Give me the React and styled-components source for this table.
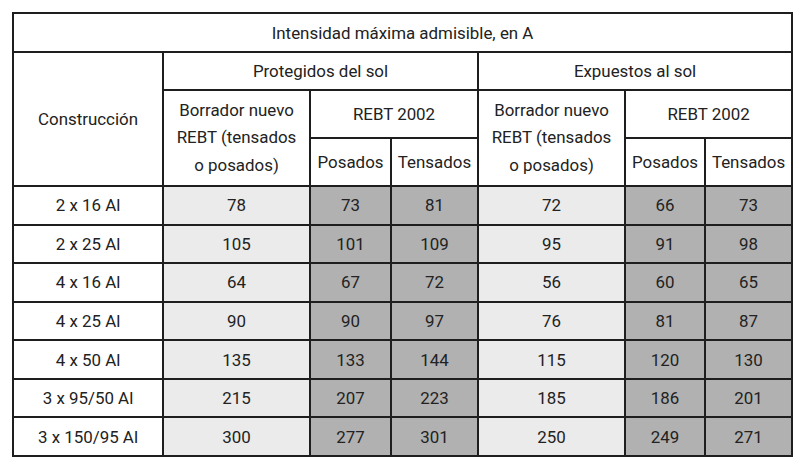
import React from "react";
import styled, { createGlobalStyle } from "styled-components";

const Global = createGlobalStyle`
  html, body { margin: 0; padding: 0; background: #fff; }
  body { font-family: Roboto, "Liberation Sans", Arial, sans-serif; color: #222; }
`;

const Page = styled.div`
  padding: 12px 0 0 12px;
  width: 800px;
  height: 466px;
  box-sizing: border-box;
`;

const Table = styled.table`
  border-collapse: collapse;
  table-layout: fixed;
  width: 781px;
  font-size: 16.9px;
  color: #222;
`;

const Th = styled.th`
  border: 2px solid #1e1e1e;
  font-weight: 400;
  text-align: center;
  vertical-align: middle;
  padding: 0;
  line-height: ${(p) => (p.$multi ? "27.5px" : "20px")};
`;

const HeadRow = styled.tr`
  height: ${(p) => p.$h}px;
`;

const BodyRow = styled.tr`
  height: 38.57px;
`;

const Td = styled.td`
  border: 2px solid #1e1e1e;
  text-align: center;
  vertical-align: middle;
  padding: 0;
  background: ${(p) =>
    p.$tone === "light" ? "#ebebeb" : p.$tone === "dark" ? "#b1b1b1" : "#ffffff"};
`;

const widths = [150, 147, 81, 87, 147, 80, 87];

const rows = [
  ["2 x 16 Al", 78, 73, 81, 72, 66, 73],
  ["2 x 25 Al", 105, 101, 109, 95, 91, 98],
  ["4 x 16 Al", 64, 67, 72, 56, 60, 65],
  ["4 x 25 Al", 90, 90, 97, 76, 81, 87],
  ["4 x 50 Al", 135, 133, 144, 115, 120, 130],
  ["3 x 95/50 Al", 215, 207, 223, 185, 186, 201],
  ["3 x 150/95 Al", 300, 277, 301, 250, 249, 271],
];

const tones = [null, "light", "dark", "dark", "light", "dark", "dark"];

export default function App() {
  return (
    <>
      <Global />
      <Page>
        <Table>
          <colgroup>
            {widths.map((w, i) => (
              <col key={i} style={{ width: w }} />
            ))}
          </colgroup>
          <thead>
            <HeadRow $h={39}>
              <Th colSpan={7}>Intensidad máxima admisible, en A</Th>
            </HeadRow>
            <HeadRow $h={38}>
              <Th rowSpan={3}>Construcción</Th>
              <Th colSpan={3}>Protegidos del sol</Th>
              <Th colSpan={3}>Expuestos al sol</Th>
            </HeadRow>
            <HeadRow $h={48}>
              <Th rowSpan={2} $multi>
                Borrador nuevo
                <br />
                REBT (tensados
                <br />o posados)
              </Th>
              <Th colSpan={2}>REBT 2002</Th>
              <Th rowSpan={2} $multi>
                Borrador nuevo
                <br />
                REBT (tensados
                <br />o posados)
              </Th>
              <Th colSpan={2}>REBT 2002</Th>
            </HeadRow>
            <HeadRow $h={48}>
              <Th>Posados</Th>
              <Th>Tensados</Th>
              <Th>Posados</Th>
              <Th>Tensados</Th>
            </HeadRow>
          </thead>
          <tbody>
            {rows.map((r) => (
              <BodyRow key={r[0]}>
                {r.map((v, i) => (
                  <Td key={i} $tone={tones[i]}>
                    {v}
                  </Td>
                ))}
              </BodyRow>
            ))}
          </tbody>
        </Table>
      </Page>
    </>
  );
}
